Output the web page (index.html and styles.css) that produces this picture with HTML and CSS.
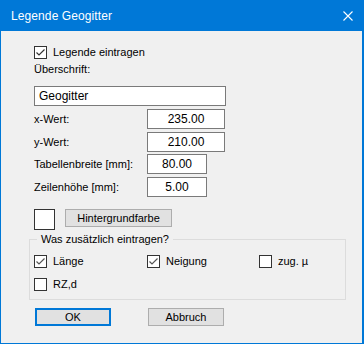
FILE: index.html
```html
<!DOCTYPE html>
<html>
<head>
<meta charset="utf-8">
<link rel="stylesheet" href="styles.css">
</head>
<body>
<div class="window">
  <div class="titlebar">
    <span class="title">Legende Geogitter</span>
    <svg class="close" width="10" height="10" viewBox="0 0 10 10"><path d="M0.5 0.5 L9.5 9.5 M9.5 0.5 L0.5 9.5" stroke="#fff" stroke-width="1.1" fill="none"/></svg>
  </div>
  <div class="content">
    <label class="check top-check"><span class="box"><svg width="11" height="11" viewBox="0 0 11 11"><path d="M1.5 5.5 L4 8 L9.5 2.5" stroke="#333" stroke-width="1.2" fill="none"/></svg></span>Legende eintragen</label>
    <div class="label-line">Überschrift:</div>
    <div class="input wide">Geogitter</div>
    <div class="field-row first"><span class="flabel">x-Wert:</span><span class="input num w78">235.00</span></div>
    <div class="field-row"><span class="flabel">y-Wert:</span><span class="input num w78">210.00</span></div>
    <div class="field-row r2"><span class="flabel">Tabellenbreite [mm]:</span><span class="input num w60">80.00</span></div>
    <div class="field-row"><span class="flabel">Zeilenhöhe [mm]:</span><span class="input num w60">5.00</span></div>
    <div class="color-row"><span class="swatch"></span><span class="btn bg-btn">Hintergrundfarbe</span></div>
    <div class="group">
      <span class="legend">Was zusätzlich eintragen?</span>
      <div class="group-grid">
        <label class="check"><span class="box"><svg width="11" height="11" viewBox="0 0 11 11"><path d="M1.5 5.5 L4 8 L9.5 2.5" stroke="#555" stroke-width="1.2" fill="none"/></svg></span>Länge</label>
        <label class="check"><span class="box"><svg width="11" height="11" viewBox="0 0 11 11"><path d="M1.5 5.5 L4 8 L9.5 2.5" stroke="#555" stroke-width="1.2" fill="none"/></svg></span>Neigung</label>
        <label class="check"><span class="box"></span>zug. µ</label>
        <label class="check"><span class="box"></span>RZ,d</label>
      </div>
    </div>
    <div class="buttons">
      <span class="btn ok">OK</span>
      <span class="btn cancel">Abbruch</span>
    </div>
  </div>
</div>
</body>
</html>
```
FILE: styles.css
```css
* { box-sizing: border-box; }
html, body { margin: 0; padding: 0; }
body {
  width: 364px;
  height: 344px;
  overflow: hidden;
  font-family: "Liberation Sans", Arial, sans-serif;
  font-size: 11px;
  color: #000;
}
.window {
  width: 364px;
  height: 344px;
  background: #f0f0f0;
  border: 1px solid #0078d7;
  border-top: 0;
  border-right-width: 2px;
}
.titlebar {
  height: 31px;
  margin: 0 -2px 0 -1px;
  background: #0078d7;
  display: flex;
  align-items: center;
  justify-content: space-between;
  padding: 0 11px 0 11px;
}
.title {
  color: #fff;
  font-size: 12px;
  letter-spacing: 0.1px;
}
.close { display: block; }
.content {
  padding-left: 33px;
}
.check {
  display: flex;
  align-items: center;
  height: 13px;
  line-height: 13px;
}
.box {
  width: 13px;
  height: 13px;
  border: 1px solid #333;
  background: #fff;
  margin-right: 6px;
  display: flex;
  flex-shrink: 0;
}
.box svg { display: block; }
.top-check { margin-top: 15px; }
.label-line {
  margin-top: 4px;
  line-height: 13px;
  height: 13px;
}
.input {
  height: 20px;
  border: 1px solid #7a7a7a;
  background: #fff;
  line-height: 18px;
  padding-left: 4px;
}
.wide {
  width: 192px;
  margin-top: 10px;
  font-size: 12px;
}
.field-row {
  display: flex;
  align-items: center;
  margin-top: 3px;
}
.field-row.first { margin-top: 3px; }
.field-row.r2 { margin-top: 2px; }
.flabel {
  width: 113px;
}
.num {
  text-align: center;
  padding-left: 0;
  font-size: 12px;
}
.w78 { width: 78px; }
.w60 { width: 60px; }
.color-row {
  display: flex;
  align-items: flex-start;
  margin-top: 12px;
}
.swatch {
  width: 21px;
  height: 21px;
  border: 1px solid #333;
  background: #fff;
  margin-right: 10px;
}
.btn {
  display: flex;
  align-items: center;
  justify-content: center;
  height: 18px;
  background: #e1e1e1;
  border: 1px solid #adadad;
}
.bg-btn { width: 107px; }
.group {
  position: relative;
  margin-left: -5px;
  margin-top: 9px;
  width: 317px;
  height: 61px;
  border: 1px solid #dcdcdc;
  padding: 15px 0 0 4px;
}
.legend {
  position: absolute;
  left: 7px;
  top: -8px;
  background: #f0f0f0;
  padding: 0 4px;
  line-height: 14px;
}
.group-grid {
  display: grid;
  grid-template-columns: 113px 112px 60px;
  row-gap: 10px;
}
.buttons {
  display: flex;
  margin-top: 8px;
  padding-left: 1px;
}
.ok {
  width: 76px;
  border: 2px solid #0078d7;
  margin-right: 37px;
}
.cancel { width: 76px; }
```
